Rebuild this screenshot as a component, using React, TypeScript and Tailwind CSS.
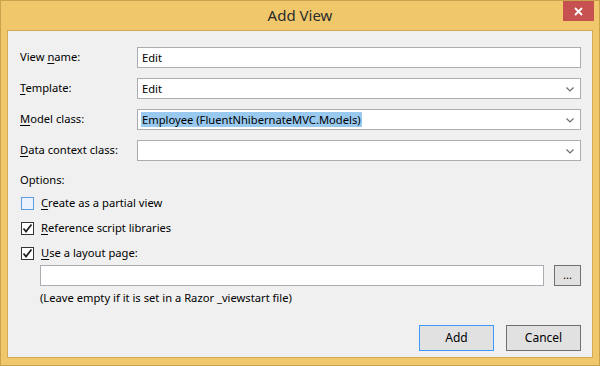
import React from "react";

const Chevron = () => (
  <svg width="8" height="5" viewBox="0 0 8 5" className="absolute right-[6px] top-[8px]">
    <path d="M0.5 0.5 L4 4 L7.5 0.5" fill="none" stroke="#6d6d6d" strokeWidth="1.2" />
  </svg>
);

const U = ({ children }: { children: React.ReactNode }) => <span className="underline underline-offset-2">{children}</span>;

const Field = ({ label, value, select, highlight }: { label: React.ReactNode; value?: string; select?: boolean; highlight?: boolean }) => (
  <div className="flex items-center h-[21px]">
    <div className="w-[117px] shrink-0 text-[#000]">{label}</div>
    <div className="relative flex-1 h-[21px] border border-[#abadb3] bg-white flex items-center pl-[3px]">
      {value && (
        <span className={"leading-[15px] px-[1px] " + (highlight ? "bg-[#99c9ef] text-[#000]" : "text-[#000]")}>{value}</span>
      )}
      {select && <Chevron />}
    </div>
  </div>
);

const Check = ({ checked, focus }: { checked?: boolean; focus?: boolean }) => (
  <div className={"w-[13px] h-[13px] border flex items-center justify-center " + (focus ? "border-[#5b9de6] bg-[#eaf3fc]" : "border-[#333] bg-white")}>
    {checked && (
      <svg width="11" height="11" viewBox="0 0 11 11">
        <path d="M1.5 5.5 L4 8.5 L9.5 1.5" fill="none" stroke="#222" strokeWidth="1.8" />
      </svg>
    )}
  </div>
);

export default function App() {
  return (
    <div className="relative w-[600px] h-[366px] bg-[#f0c86b] border border-[#c9a24e] flex flex-col" style={{ fontFamily: '"Noto Sans", "Open Sans", sans-serif' }}>
      <div className="h-[29px] flex items-center justify-center text-[15px] text-[#2b2b2b]">Add View</div>
      <div className="absolute right-[5px] top-0 w-[31px] h-[20px] bg-[#c75050] flex items-center justify-center">
        <svg width="9" height="9" viewBox="0 0 9 9">
          <path d="M1 1 L8 8 M8 1 L1 8" stroke="#fff" strokeWidth="1.8" />
        </svg>
      </div>
      <div className="mx-[6px] mb-[7px] flex-1 border border-[#d3a953] bg-[#f0f0f0] text-[11.2px] text-black flex flex-col pl-[12px] pr-[11px] pt-[16px]">
        <div className="flex flex-col gap-[10px]">
          <Field label={<>View <U>n</U>ame:</>} value="Edit" />
          <Field label={<><U>T</U>emplate:</>} value="Edit" select />
          <Field label={<><U>M</U>odel class:</>} value="Employee (FluentNhibernateMVC.Models)" select highlight />
          <Field label={<><U>D</U>ata context class:</>} select />
        </div>
        <div className="mt-[11px] leading-[16px]">Options:</div>
        <div className="mt-[9px] flex flex-col gap-[12px] pl-[1px]">
          <div className="flex items-center gap-[7px] h-[13px]"><Check focus /><span><U>C</U>reate as a partial view</span></div>
          <div className="flex items-center gap-[7px] h-[13px]"><Check checked /><span><U>R</U>eference script libraries</span></div>
          <div className="flex items-center gap-[7px] h-[13px]"><Check checked /><span><U>U</U>se a layout page:</span></div>
        </div>
        <div className="mt-[5px] pl-[20px] flex items-center">
          <div className="flex-1 h-[21px] border border-[#abadb3] bg-white" />
          <div className="ml-[10px] w-[27px] h-[21px] border border-[#707070] bg-[#e1e1e1] flex items-center justify-center text-[11px] leading-none pb-[3px]">...</div>
        </div>
        <div className="mt-[4px] pl-[20px] leading-[16px]">(Leave empty if it is set in a Razor _viewstart file)</div>
        <div className="mt-[19px] flex justify-end gap-[12px] text-[12px]">
          <div className="w-[75px] h-[26px] border border-[#3c9aff] bg-[#e1e1e1] flex items-center justify-center">Add</div>
          <div className="w-[75px] h-[26px] border border-[#707070] bg-[#e1e1e1] flex items-center justify-center">Cancel</div>
        </div>
      </div>
    </div>
  );
}
